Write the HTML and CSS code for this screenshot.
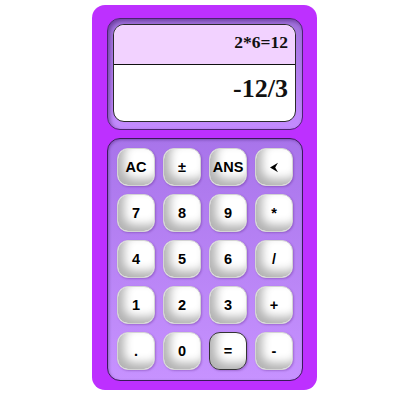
FILE: index.html
```html
<!DOCTYPE html>
<html>
<head>
<meta charset="utf-8">
<link rel="stylesheet" href="styles.css">
</head>
<body>
<div class="calc">
  <div class="display-frame">
    <div class="display">
      <div class="history">2*6=12</div>
      <div class="current">-12/3</div>
    </div>
  </div>
  <div class="keypad">
    <button class="key">AC</button>
    <button class="key">±</button>
    <button class="key">ANS</button>
    <button class="key"><svg width="10" height="11" viewBox="0 0 10 11"><path d="M1 5.5 L9 0.8 L6.2 5.5 L9 10.2 Z" fill="#000"/></svg></button>
    <button class="key">7</button>
    <button class="key">8</button>
    <button class="key">9</button>
    <button class="key">*</button>
    <button class="key">4</button>
    <button class="key">5</button>
    <button class="key">6</button>
    <button class="key">/</button>
    <button class="key">1</button>
    <button class="key">2</button>
    <button class="key">3</button>
    <button class="key">+</button>
    <button class="key">.</button>
    <button class="key">0</button>
    <button class="key active">=</button>
    <button class="key">-</button>
  </div>
</div>
</body>
</html>
```

FILE: styles.css
```css
html, body {
  margin: 0;
  padding: 0;
  background: #fff;
}
.calc {
  margin: 5px 0 0 92px;
  width: 225px;
  height: 385px;
  box-sizing: border-box;
  background: #bd30ff;
  border-radius: 13px;
  padding: 13px 14px 9px 15px;
  display: flex;
  flex-direction: column;
  gap: 8px;
}
.display-frame {
  height: 112px;
  box-sizing: border-box;
  border: 1px solid #4a2470;
  border-radius: 13px;
  background: linear-gradient(#a070dc, #c48cff);
  box-shadow: inset 2px 2px 4px rgba(40, 0, 80, 0.45);
  padding: 5px 6px 7px 5px;
}
.display {
  height: 98px;
  box-sizing: border-box;
  border: 1px solid #2a2a2a;
  border-radius: 11px;
  overflow: hidden;
  background: #fff;
  display: flex;
  flex-direction: column;
  font-family: "Liberation Serif", "Times New Roman", serif;
  font-weight: bold;
  color: #111;
}
.history {
  height: 40px;
  box-sizing: border-box;
  background: #f2d2ff;
  border-bottom: 1px solid #111;
  text-align: right;
  font-size: 17.5px;
  padding: 7px 7px 0 0;
  line-height: 21px;
}
.current {
  text-align: right;
  font-size: 26px;
  line-height: 30px;
  padding: 9px 7px 0 0;
}
.keypad {
  flex: 1;
  box-sizing: border-box;
  border: 1px solid #3a1a5a;
  border-radius: 13px;
  background: linear-gradient(#a874ea, #c792ff);
  box-shadow: inset 1px 1px 3px rgba(40, 0, 80, 0.35);
  padding: 9px;
  display: grid;
  grid-template-columns: repeat(4, 38px);
  grid-auto-rows: 38px;
  column-gap: 8px;
  row-gap: 8px;
}
.key {
  margin: 0;
  padding: 0;
  box-sizing: border-box;
  border: 1px solid #d4d4d4;
  border-radius: 11px;
  background: #fff;
  box-shadow: inset 6px -6px 10px rgba(0, 0, 0, 0.3), 1px 1px 2px rgba(60, 0, 100, 0.25);
  font-family: "Liberation Sans", Arial, sans-serif;
  font-weight: bold;
  font-size: 14.5px;
  color: #000;
  display: flex;
  align-items: center;
  justify-content: center;
}
.key.active {
  border: 1px solid #333;
}
```
